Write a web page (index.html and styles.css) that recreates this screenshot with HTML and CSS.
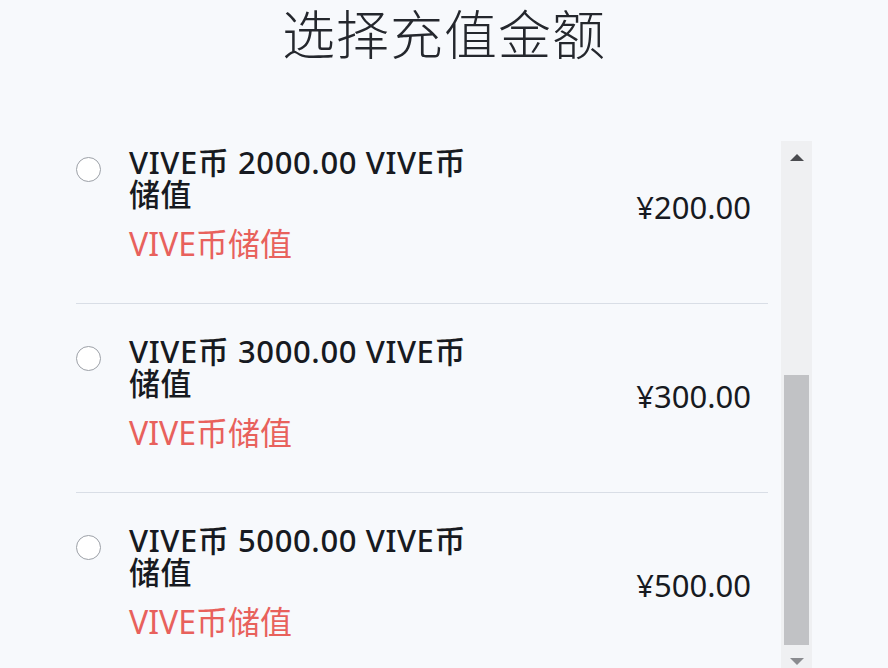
FILE: index.html
```html
<!DOCTYPE html>
<html>
  <head>
    <meta charset="utf-8">
    <title>选择充值金额</title>
    <link rel="stylesheet" href="styles.css">
  </head>
  <body>
    <h1 class="page-title">选择充值金额</h1>

    <div class="panel">
      <div class="list">
        <div class="list-inner">
          <div class="item">
            <span class="radio"></span>
            <div class="info">
              <div class="name">VIVE币 2000.00 VIVE币储值</div>
              <div class="desc">VIVE币储值</div>
            </div>
            <div class="price">¥200.00</div>
          </div>

          <div class="item">
            <span class="radio"></span>
            <div class="info">
              <div class="name">VIVE币 3000.00 VIVE币储值</div>
              <div class="desc">VIVE币储值</div>
            </div>
            <div class="price">¥300.00</div>
          </div>

          <div class="item">
            <span class="radio"></span>
            <div class="info">
              <div class="name">VIVE币 5000.00 VIVE币储值</div>
              <div class="desc">VIVE币储值</div>
            </div>
            <div class="price">¥500.00</div>
          </div>
        </div>
      </div>

      <div class="scrollbar">
        <div class="sb-up"><span class="arrow-up"></span></div>
        <div class="sb-thumb"></div>
        <div class="sb-down"><span class="arrow-down"></span></div>
      </div>
    </div>
  </body>
</html>
```

FILE: styles.css
```css
body {
  margin: 0;
  background-color: #f7f9fc;
  font-family: "Noto Sans", "Noto Sans CJK SC", sans-serif;
  color: #1b1e25;
  overflow: hidden;
}

.page-title {
  margin: 0;
  height: 141px;
  padding-top: 2px;
  box-sizing: border-box;
  text-align: center;
  font-family: "Noto Sans CJK SC", sans-serif;
  font-size: 53px;
  font-weight: 300;
  line-height: 60px;
  letter-spacing: 1px;
  color: #24272d;
}

.panel {
  display: flex;
  padding-left: 76px;
  height: 527px;
}

.list {
  width: 692px;
  margin-right: 13px;
  overflow: hidden;
}

.list-inner {
  margin-top: -26px;
}

.item {
  display: flex;
  align-items: center;
  padding: 31px 17px 42px 0;
  border-bottom: 1px solid #d9dee6;
}

.radio {
  align-self: flex-start;
  width: 23px;
  height: 23px;
  margin-top: 11px;
  border: 1.5px solid #9ca0a7;
  border-radius: 50%;
  background-color: #fff;
}

.info {
  width: 350px;
  margin-left: 28px;
}

.name {
  font-size: 31px;
  font-weight: 500;
  line-height: 32px;
  letter-spacing: 0.6px;
  color: #171a21;
}

.desc {
  margin-top: 17px;
  font-size: 32px;
  line-height: 34px;
  color: #e8615c;
}

.price {
  margin-left: auto;
  margin-top: 6px;
  font-size: 31px;
  line-height: 32px;
  color: #171a21;
}

.scrollbar {
  width: 31px;
  display: flex;
  flex-direction: column;
  background-color: #eff0f2;
}

.sb-up {
  height: 234px;
  display: flex;
  justify-content: center;
  padding-top: 13px;
  box-sizing: border-box;
}

.sb-thumb {
  height: 270px;
  margin: 0 3px;
  background-color: #c1c2c5;
}

.sb-down {
  flex: 1;
  display: flex;
  justify-content: center;
  padding-top: 13px;
  box-sizing: border-box;
}

.arrow-up {
  width: 0;
  height: 0;
  border-left: 7px solid transparent;
  border-right: 7px solid transparent;
  border-bottom: 7px solid #4a4b4f;
}

.arrow-down {
  width: 0;
  height: 0;
  border-left: 7px solid transparent;
  border-right: 7px solid transparent;
  border-top: 7px solid #8a8b8f;
}
```
